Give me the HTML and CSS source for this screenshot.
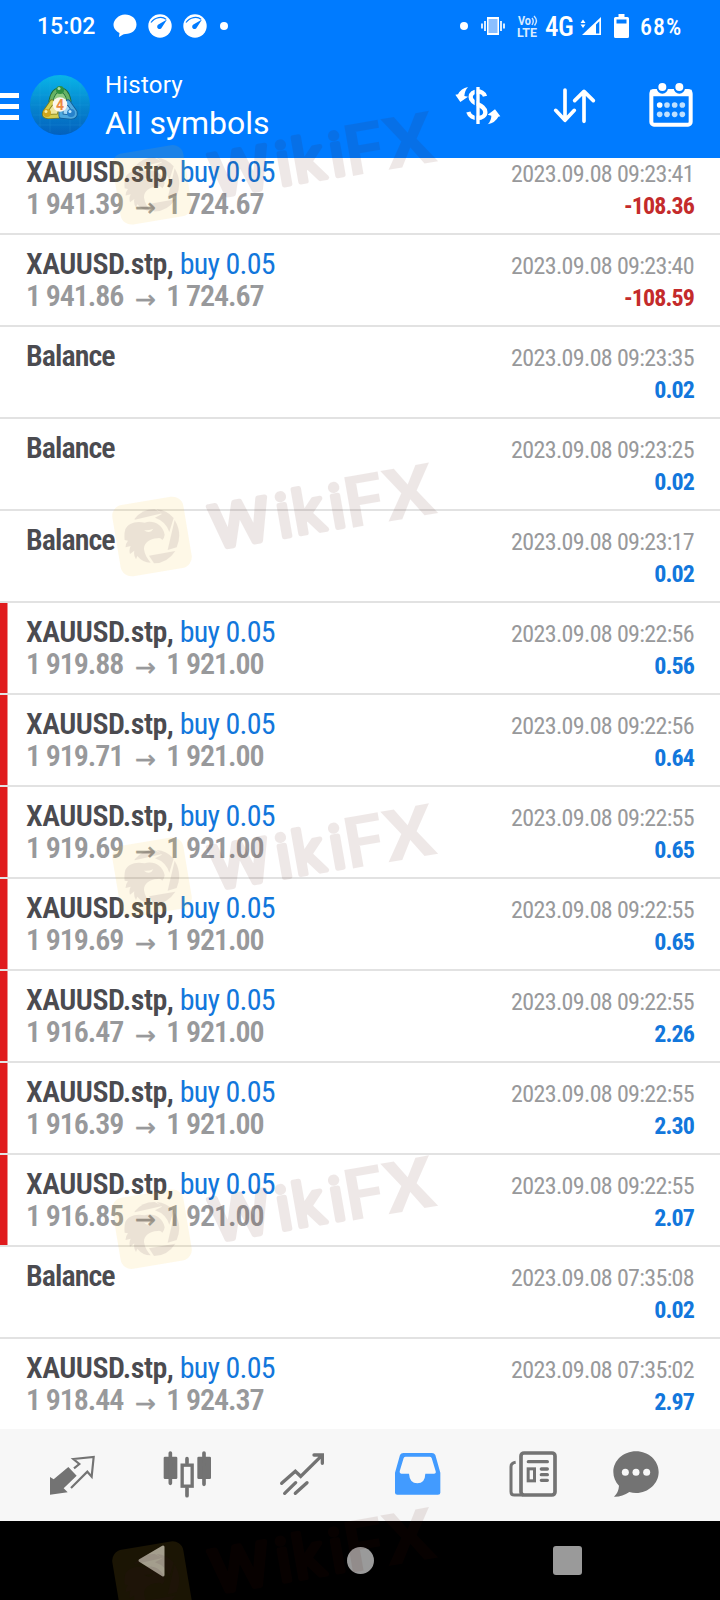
FILE: index.html
```html
<!DOCTYPE html>
<html lang="en">
<head>
<meta charset="UTF-8">
<title>History</title>
<link rel="stylesheet" href="styles.css">
</head>
<body>
<svg class="defs" width="0" height="0">
  <symbol id="gauge" viewBox="0 0 24 24">
    <circle cx="12" cy="12" r="11.7" fill="#fff"/>
    <path d="M3 8.5C7 2.8 14.5 2.3 18 5.2" fill="none" stroke="#007bff" stroke-width="1.2"/>
    <path d="M19 5.5L13.8 13.6A2.4 2.4 0 1 1 10.4 10.6Z" fill="#007bff"/>
  </symbol>
  <symbol id="watermark" viewBox="0 0 350 140">
    <rect x="16" y="50.5" width="72" height="72" rx="11" transform="rotate(-9.5 52 86.5)" fill="#fabe20" opacity=".11"/>
    <g transform="scale(.3333)" fill="#3c1430" opacity=".09">
      <path d="M104 206Q128 177 164 178L187 190L104 209Z"/>
      <path d="M170 178Q200 180 221 204L208 246Q198 214 165 203L186 192Z"/>
      <path d="M224 210Q248 250 230 292L203 300Z"/>
      <path d="M147 317L226 303Q202 340 162 340Z"/>
      <path fill-rule="evenodd" d="M76 238C84 222 104 212 134 218C158 210 188 222 194 254Q193 264 187 270Q182 262 172 265C148 266 131 280 132 298C134 314 142 326 152 338Q128 338 112 318L108 328Q100 316 103 302L90 312Q86 300 92 288L77 292Q76 282 84 272L74 270Q72 252 76 238ZM132 240Q142 250 154 244L160 236Q144 242 132 240Z"/>
    </g>
    <g transform="translate(111 99.5) rotate(-9.9)" fill="#501008" stroke="#501008" opacity=".095">
      <text class="wm-round" x="3" y="0" textLength="60" lengthAdjust="spacingAndGlyphs">W</text>
      <text class="wm-round" x="70 87 124" y="0">iki</text>
      <text class="wm-sharp" x="139" y="3" textLength="40" lengthAdjust="spacingAndGlyphs">F</text>
      <text class="wm-sharp" x="179" y="3" textLength="52" lengthAdjust="spacingAndGlyphs">X</text>
    </g>
  </symbol>
</svg>

<div class="phone">
  <header>
    <div class="status">
      <span class="time">15:02</span>
      <svg class="chat" width="24" height="24" viewBox="0 0 24 24"><path d="M12 0.5C18.5 0.5 23.5 4.8 23.5 10.5S18.5 20 12.5 20C10 20 8.5 21.5 6 23L6.5 19C3 17 0.5 14.5 0.5 10.5S5.5 0.5 12 0.5Z" fill="#fff"/></svg>
      <svg class="gauge" width="24" height="24"><use href="#gauge"/></svg>
      <svg class="gauge" width="24" height="24"><use href="#gauge"/></svg>
      <i class="dot"></i>
      <i class="dot dot-right"></i>
      <svg class="vibrate" width="24" height="20" viewBox="0 0 24 20"><rect x="6" y="1" width="12" height="18" fill="#fff"/><rect x="7.5" y="3" width="9" height="14" fill="#8abfff"/><path d="M1 7.5v5M4 5v10M20 5v10M23 7.5v5" stroke="#fff" stroke-width="1.7"/></svg>
      <svg class="volte" width="22" height="23" viewBox="0 0 22 23"><text x="1" y="10" textLength="13" lengthAdjust="spacingAndGlyphs">Vo</text><text x="0" y="22" textLength="20" lengthAdjust="spacingAndGlyphs">LTE</text><path d="M15 3Q17.5 6 15 10M17 1Q21.5 5.5 17.5 10.5" fill="none" stroke="#cfe6ff" stroke-width="1.4"/></svg>
      <span class="net">4G</span>
      <svg class="signal" width="22" height="19" viewBox="0 0 22 19"><path d="M0.5 6L3 2.5L5.5 6ZM0.5 7.5L3 11L5.5 7.5Z" fill="#fff"/><path d="M2 18L21 0V18Z" fill="#fff"/><path d="M16 7.5L19.3 4.3V16.5H16Z" fill="#007bff"/></svg>
      <svg class="battery" width="15" height="24" viewBox="0 0 15 24"><path d="M4.5 0h6v3H13.5Q15 3 15 4.5V22.5Q15 24 13.5 24H1.5Q0 24 0 22.5V4.5Q0 3 1.5 3H4.5Z" fill="#fff"/><path d="M2.5 5.5h10v4h-10z" fill="#007bff"/></svg>
      <span class="percent">68%</span>
    </div>
    <div class="toolbar">
      <div class="menu"><i></i><i></i><i></i></div>
      <svg class="logo" width="60" height="60" viewBox="0 0 60 60">
        <defs>
          <linearGradient id="sky" x2="0" y2="1"><stop offset="0" stop-color="#08b5e8"/><stop offset=".5" stop-color="#0687cf"/><stop offset="1" stop-color="#0360bd"/></linearGradient>
        </defs>
        <circle cx="30" cy="30" r="30" fill="url(#sky)"/>
        <path d="M10 8v44M20 3v54M40 3v54M50 8v44M3 20h54M1 30h58M3 40h54M8 50h44" stroke="#3fb6ee" stroke-width=".5" opacity=".3"/>
        <g stroke-linejoin="round">
          <path d="M30 15Q37 15 39 26L35 33H25L21 26Q23 15 30 15Z" fill="#8fcb82" stroke="#1d6a3a" stroke-width="5"/>
          <path d="M30 15Q37 15 39 26L35 33H25L21 26Q23 15 30 15Z" fill="none" stroke="#67b264" stroke-width="3.4"/>
          <path d="M22 27L15 37Q13 42 19 41.5L29 41L31 33Z" fill="#eee69b" stroke="#7b7b1c" stroke-width="5"/>
          <path d="M22 27L15 37Q13 42 19 41.5L29 41L31 33Z" fill="none" stroke="#d3cd4f" stroke-width="3.4"/>
          <path d="M38 27L45 37Q46 42 41 42L31 41L31 33Z" fill="#a4d8f7" stroke="#125a94" stroke-width="5"/>
          <path d="M38 27L45 37Q46 42 41 42L31 41L31 33Z" fill="none" stroke="#4fa9df" stroke-width="3.4"/>
        </g>
        <circle cx="30" cy="15" r="4" fill="#2e9142"/><circle cx="29" cy="13.5" r="1.5" fill="#b0dca5"/>
        <circle cx="17" cy="38" r="4" fill="#d2a61d"/><circle cx="16" cy="36.5" r="1.5" fill="#fbeea0"/>
        <circle cx="41" cy="38" r="4" fill="#2781cb"/><circle cx="40" cy="36.5" r="1.5" fill="#b9e3ff"/>
        <circle cx="30" cy="29.5" r="7.3" fill="#fcf6ee"/>
        <text class="four" x="30" y="34.5" text-anchor="middle">4</text>
      </svg>
      <div class="titles">
        <div class="page">History</div>
        <div class="filter">All symbols</div>
      </div>
      <svg class="dollar" width="48" height="42" viewBox="281 255 144 126">
        <path d="M374 289C369 269 331 270 331 291C331 314 375 312 375 337C375 359 331 361 324 336" fill="none" stroke="#fff" stroke-width="13"/>
        <path d="M346 260v112" stroke="#007bff" stroke-width="6"/>
        <path d="M353 261v111" stroke="#fff" stroke-width="10"/>
        <path d="M323 261Q302 265 293 283L285 284L300 306L323 290L312 288Q313 272 323 261Z" fill="#fff"/>
        <path d="M382 373Q405 368 414 350L420 349L404 328L382 344L393 347Q393 362 382 373Z" fill="#fff"/>
      </svg>
      <svg class="sort" width="42" height="36" viewBox="579 263 126 108"><path d="M615 269V360M587 330L615 360L643 330M672 363V273M644 301L672 273L700 301" fill="none" stroke="#fff" stroke-width="11" stroke-linecap="round" stroke-linejoin="round"/></svg>
      <svg class="calendar" width="44" height="45" viewBox="866 248 132 135">
        <rect x="873" y="272" width="118" height="101" rx="8" fill="none" stroke="#fff" stroke-width="12"/>
        <path d="M870 268H994V288H870Z" fill="#fff"/>
        <circle cx="906" cy="263" r="17" fill="#007bff"/><circle cx="957" cy="263" r="17" fill="#007bff"/>
        <circle cx="906" cy="260" r="12" fill="#fff"/><circle cx="957" cy="260" r="12" fill="#fff"/>
        <g fill="#bfe0ff"><circle cx="898" cy="314" r="8.5" fill="#fff"/><circle cx="920" cy="314" r="8.5"/><circle cx="943" cy="314" r="8.5"/><circle cx="966" cy="314" r="8.5"/><circle cx="898" cy="342" r="8.5"/><circle cx="920" cy="342" r="8.5"/><circle cx="943" cy="342" r="8.5"/><circle cx="966" cy="342" r="8.5"/></g>
      </svg>
    </div>
  </header>

  <main>
    <div class="list">
      <div class="row">
        <div class="deal"><div class="name">XAUUSD.stp, <span>buy 0.05</span></div><div class="price">1 941.39<b>→</b>1 724.67</div></div>
        <div class="result"><div class="date">2023.09.08 09:23:41</div><div class="sum loss">-108.36</div></div>
      </div>
      <div class="row">
        <div class="deal"><div class="name">XAUUSD.stp, <span>buy 0.05</span></div><div class="price">1 941.86<b>→</b>1 724.67</div></div>
        <div class="result"><div class="date">2023.09.08 09:23:40</div><div class="sum loss">-108.59</div></div>
      </div>
      <div class="row">
        <div class="deal"><div class="name balance">Balance</div></div>
        <div class="result"><div class="date">2023.09.08 09:23:35</div><div class="sum">0.02</div></div>
      </div>
      <div class="row">
        <div class="deal"><div class="name balance">Balance</div></div>
        <div class="result"><div class="date">2023.09.08 09:23:25</div><div class="sum">0.02</div></div>
      </div>
      <div class="row">
        <div class="deal"><div class="name balance">Balance</div></div>
        <div class="result"><div class="date">2023.09.08 09:23:17</div><div class="sum">0.02</div></div>
      </div>
      <div class="row marked">
        <div class="deal"><div class="name">XAUUSD.stp, <span>buy 0.05</span></div><div class="price">1 919.88<b>→</b>1 921.00</div></div>
        <div class="result"><div class="date">2023.09.08 09:22:56</div><div class="sum">0.56</div></div>
      </div>
      <div class="row marked">
        <div class="deal"><div class="name">XAUUSD.stp, <span>buy 0.05</span></div><div class="price">1 919.71<b>→</b>1 921.00</div></div>
        <div class="result"><div class="date">2023.09.08 09:22:56</div><div class="sum">0.64</div></div>
      </div>
      <div class="row marked">
        <div class="deal"><div class="name">XAUUSD.stp, <span>buy 0.05</span></div><div class="price">1 919.69<b>→</b>1 921.00</div></div>
        <div class="result"><div class="date">2023.09.08 09:22:55</div><div class="sum">0.65</div></div>
      </div>
      <div class="row marked">
        <div class="deal"><div class="name">XAUUSD.stp, <span>buy 0.05</span></div><div class="price">1 919.69<b>→</b>1 921.00</div></div>
        <div class="result"><div class="date">2023.09.08 09:22:55</div><div class="sum">0.65</div></div>
      </div>
      <div class="row marked">
        <div class="deal"><div class="name">XAUUSD.stp, <span>buy 0.05</span></div><div class="price">1 916.47<b>→</b>1 921.00</div></div>
        <div class="result"><div class="date">2023.09.08 09:22:55</div><div class="sum">2.26</div></div>
      </div>
      <div class="row marked">
        <div class="deal"><div class="name">XAUUSD.stp, <span>buy 0.05</span></div><div class="price">1 916.39<b>→</b>1 921.00</div></div>
        <div class="result"><div class="date">2023.09.08 09:22:55</div><div class="sum">2.30</div></div>
      </div>
      <div class="row marked">
        <div class="deal"><div class="name">XAUUSD.stp, <span>buy 0.05</span></div><div class="price">1 916.85<b>→</b>1 921.00</div></div>
        <div class="result"><div class="date">2023.09.08 09:22:55</div><div class="sum">2.07</div></div>
      </div>
      <div class="row">
        <div class="deal"><div class="name balance">Balance</div></div>
        <div class="result"><div class="date">2023.09.08 07:35:08</div><div class="sum">0.02</div></div>
      </div>
      <div class="row">
        <div class="deal"><div class="name">XAUUSD.stp, <span>buy 0.05</span></div><div class="price">1 918.44<b>→</b>1 924.37</div></div>
        <div class="result"><div class="date">2023.09.08 07:35:02</div><div class="sum">2.97</div></div>
      </div>
    </div>
  </main>

  <nav class="tabs">
    <svg width="48" height="48" viewBox="144 93 144 144">
      <path d="M150 224V171L161 178L205 141L230 167L191 205L203 217Z" fill="#737373"/>
      <path d="M222 145L238 132L220 117L281 111L275 170L262 155L213 204" fill="none" stroke="#737373" stroke-width="6.5"/>
    </svg>
    <svg width="48" height="48" viewBox="490 93 144 144">
      <g fill="#737373"><rect x="492" y="110" width="41" height="67" rx="4"/><rect x="593" y="110" width="41" height="67" rx="4"/></g>
      <path d="M512 99V190M613 99V193M562 116V130M562 205V227" stroke="#737373" stroke-width="11" stroke-linecap="round"/>
      <rect x="547.5" y="135.5" width="30" height="63" fill="none" stroke="#737373" stroke-width="10"/>
    </svg>
    <svg width="48" height="48" viewBox="834 93 144 144"><path d="M845 190L886 154L902 169L966 106M942 105H967V130M854 220L887 188M886 220L921 188" fill="none" stroke="#737373" stroke-width="10" stroke-linecap="round"/></svg>
    <svg width="48" height="48" viewBox="99 93 144 144"><path fill-rule="evenodd" d="M130 99H216Q223 99 226 105L241 158V218Q241 224 234 224H112Q105 224 105 218V158L120 105Q123 99 130 99ZM137 110Q133 110 131 114L119 154Q118 161 124 161H147Q149 190 172 190T196 161H222Q229 161 227 154L215 114Q213 110 209 110Z" fill="#429bff"/></svg>
    <svg width="48" height="48" viewBox="444 93 144 144">
      <rect x="483" y="99" width="102" height="126" rx="9" fill="none" stroke="#737373" stroke-width="11"/>
      <path d="M490 225H463Q453 225 453 215V140Q453 129 467 127" fill="none" stroke="#737373" stroke-width="9"/>
      <path d="M505 125H562M544 147H562M544 164H562M544 181H562" stroke="#737373" stroke-width="10" stroke-linecap="round"/>
      <rect x="504.5" y="146.5" width="19" height="36" fill="none" stroke="#737373" stroke-width="9"/>
    </svg>
    <svg class="last" width="48" height="48" viewBox="753 93 144 144">
      <path d="M828 94C866 94 896 122 896 156S866 219 828 219Q818 219 808 216Q786 231 762 230Q776 217 777 197C766 186 760 171 760 156C760 122 790 94 828 94Z" fill="#737373"/>
      <g fill="#f7f7f7"><circle cx="796" cy="157" r="10.5"/><circle cx="828" cy="157" r="10.5"/><circle cx="860" cy="157" r="10.5"/></g>
    </svg>
  </nav>

  <div class="android">
    <svg class="back" width="28" height="32" viewBox="0 0 28 32"><path d="M25 2V30L2 15.5Z" fill="#9a9a9a" stroke="#9a9a9a" stroke-width="3" stroke-linejoin="round"/></svg>
    <i class="home"></i>
    <i class="recent"></i>
  </div>

  <svg class="watermarks" width="720" height="1600">
    <use href="#watermark" x="100" y="98.3" width="350" height="140"/>
    <use href="#watermark" x="100" y="450" width="350" height="140"/>
    <use href="#watermark" x="100" y="790.7" width="350" height="140"/>
    <use href="#watermark" x="100" y="1142.7" width="350" height="140"/>
    <use href="#watermark" x="100" y="1494.6" width="350" height="140"/>
  </svg>
</div>
</body>
</html>
```
FILE: styles.css
```css
body {
  margin: 0;
  background-color: #fff;
  font-family: Roboto, sans-serif;
}
svg {
  display: block;
  flex: none;
  overflow: visible;
}
.defs {
  position: absolute;
}
.phone {
  position: relative;
  display: flex;
  flex-direction: column;
  width: 720px;
  height: 1600px;
  overflow: hidden;
}
header {
  flex: none;
  height: 158px;
  background-color: #007bff;
  color: #fff;
}
.status {
  display: flex;
  align-items: center;
  box-sizing: border-box;
  height: 52px;
  padding-left: 37px;
  font-size: 23px;
  line-height: 52px;
}
.time {
  width: 76px;
  padding-top: 2px;
  font-weight: 500;
}
.gauge {
  margin-left: 11px;
}
.dot {
  flex: none;
  width: 8px;
  height: 8px;
  margin-left: 13px;
  border-radius: 50%;
  background-color: #fff;
}
.dot-right {
  margin-left: 232px;
}
.vibrate {
  margin-left: 13px;
}
.volte {
  margin-left: 12px;
}
.volte text {
  font-size: 12px;
  font-weight: 700;
  fill: #d9ebff;
}
.net {
  width: 28px;
  margin-left: 6px;
  padding-top: 2px;
  font-family: "Roboto Condensed", sans-serif;
  font-size: 27px;
  font-weight: 500;
  letter-spacing: -0.5px;
}
.signal {
  margin-left: 7px;
}
.battery {
  margin-left: 12px;
}
.percent {
  margin-left: 11px;
  padding-top: 2px;
  font-family: "Roboto Condensed", sans-serif;
  font-size: 24px;
  font-weight: 500;
  letter-spacing: 1px;
}
.toolbar {
  display: flex;
  align-items: flex-start;
}
.menu {
  display: flex;
  flex-direction: column;
  gap: 6px;
  width: 19px;
  margin-top: 41px;
}
.menu i {
  height: 5px;
  background-color: #fff;
}
.logo {
  margin: 23px 0 0 11px;
}
.four {
  font-size: 14px;
  font-weight: 700;
  fill: #ec8a41;
}
.titles {
  width: 349px;
  margin: 18px 0 0 15px;
}
.page {
  font-size: 24px;
  line-height: 30px;
  letter-spacing: 0.2px;
}
.filter {
  margin-top: 3px;
  font-size: 32px;
  line-height: 40px;
}
.dollar {
  margin-top: 33px;
}
.sort {
  margin: 36px 0 0 51px;
}
.calendar {
  margin: 31px 0 0 54px;
}
main {
  height: 1271px;
  overflow: hidden;
}
.list {
  margin-top: -15px;
  font-family: "Roboto Condensed", sans-serif;
}
.row {
  display: flex;
  justify-content: space-between;
  box-sizing: border-box;
  height: 92px;
  padding: 13px 26px 0;
  border-bottom: 2px solid #e2e2e2;
}
.row:last-child {
  border-bottom: none;
}
.marked {
  box-shadow: inset 7.5px 0 #e01b1d;
}
.name,
.price {
  font-size: 30px;
  font-weight: 600;
  line-height: 32px;
  white-space: nowrap;
}
.name {
  color: #4b4b50;
  letter-spacing: -0.5px;
}
.name span {
  color: #1277dc;
  font-weight: 400;
  letter-spacing: -0.75px;
}
.balance {
  letter-spacing: -0.95px;
}
.price {
  color: #98999b;
  letter-spacing: -1.1px;
}
.price b {
  position: relative;
  top: 2px;
  display: inline-block;
  width: 43px;
  font-family: "DejaVu Sans", sans-serif;
  font-size: 25px;
  font-weight: 400;
  line-height: 20px;
  text-align: center;
  -webkit-text-stroke: 0.4px #98999b;
}
.result {
  padding-top: 2px;
  font-size: 24px;
  line-height: 32px;
  text-align: right;
}
.date {
  color: #98999b;
  letter-spacing: -0.65px;
}
.sum {
  color: #1277dc;
  font-weight: 700;
  letter-spacing: -0.9px;
}
.loss {
  color: #c42b2b;
}
.tabs {
  display: flex;
  gap: 67px;
  box-sizing: border-box;
  height: 92px;
  padding: 22px 0 0 48px;
  background-color: #f7f7f7;
}
.last {
  margin-left: -12px;
}
.android {
  display: flex;
  align-items: center;
  height: 79px;
  padding-left: 138px;
  background-color: #000;
}
.home {
  width: 27px;
  height: 27px;
  margin-left: 181px;
  border-radius: 50%;
  background-color: #9a9a9a;
}
.recent {
  width: 29px;
  height: 29px;
  margin-left: 179px;
  border-radius: 3px;
  background-color: #9a9a9a;
}
.watermarks {
  position: absolute;
  top: 0;
  left: 0;
  pointer-events: none;
}
.wm-round {
  font-size: 60px;
  font-weight: 400;
  stroke-width: 5px;
  stroke-linejoin: round;
  stroke-linecap: round;
}
.wm-sharp {
  font-size: 72px;
  font-weight: 700;
  stroke-width: 0;
}
```
